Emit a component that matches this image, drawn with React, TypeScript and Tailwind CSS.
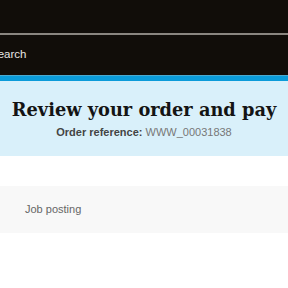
import React from 'react';

const App = () => {
  return (
    <div className="w-full min-h-[288px] bg-white" style={{ fontFamily: '"Liberation Sans", Arial, sans-serif' }}>
      <header className="bg-[#110d09]">
        <div className="h-[35px] border-b-2 border-[#8a8680]" />
        <div className="h-[40px] flex items-center">
          <span className="-ml-[10px] text-[11.5px] text-[#e8e6e3]">Search</span>
        </div>
      </header>
      <div className="h-[6px] bg-[#0b9bd9] border-t border-[#4aa9cf]" />
      <section className="bg-[#d9f0fa] h-[75px] flex flex-col items-center pt-[17px]">
        <h1
          className="text-[17.8px] leading-[24px] font-bold text-[#141414]"
          style={{ fontFamily: '"DejaVu Serif", "Liberation Serif", serif' }}
        >
          Review your order and pay
        </h1>
        <p className="mt-[3px] text-[11px] leading-[14px] text-[#555]">
          <span className="font-bold text-[#444]">Order reference:</span> <span className="text-[#777]">WWW_00031838</span>
        </p>
      </section>
      <div className="h-[30px]" />
      <div className="bg-[#f8f8f8] h-[47px] flex items-center px-[25px]">
        <span className="text-[11px] text-[#666]">Job posting</span>
      </div>
    </div>
  );
};

export default App;
